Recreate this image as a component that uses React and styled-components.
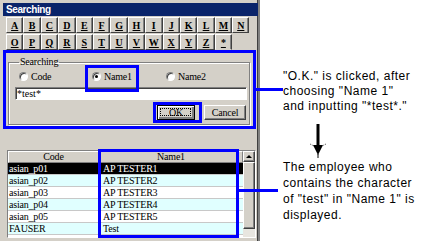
import React from 'react';
import styled, { createGlobalStyle } from 'styled-components';

const GlobalStyle = createGlobalStyle`
  html, body { margin: 0; padding: 0; background: #fff; }
  body { width: 423px; height: 241px; overflow: hidden; }
  * { box-sizing: border-box; }
`;

const serif = `"Liberation Serif", "DejaVu Serif", serif`;
const sans = `"Liberation Sans", Arial, sans-serif`;
const BLUE = '#0000ff';
const FACE = '#d4d0c8';

const Page = styled.div`
  position: relative;
  display: flex;
  width: 423px;
  height: 241px;
  overflow: hidden;
  background: #fff;
`;

const Dialog = styled.div`
  flex: none;
  width: 260px;
  height: 241px;
  padding-top: 3px;
  background: ${FACE};
  border-right: 2px solid #808080;
  box-shadow: inset -1px 0 #404040;
  display: flex;
  flex-direction: column;
`;

const TitleBar = styled.div`
  height: 13px;
  margin-left: 3px;
  padding-left: 3px;
  background: #0a246a;
  color: #fff;
  font: bold 10px ${sans};
  letter-spacing: -0.4px;
  line-height: 13px;
`;

const Tabs = styled.div`
  margin-top: 1px;
  padding-left: 6px;
  display: flex;
  flex-direction: column;
  gap: 1px;
`;

const TabRow = styled.div`
  display: grid;
  grid-template-columns: repeat(14, 17.4px);
  height: 16px;
`;

const Tab = styled.div`
  display: grid;
  place-items: center;
  background: ${FACE};
  border: 1px solid;
  border-color: #fff #404040 ${p => (p.$active ? FACE : '#404040')} #fff;
  box-shadow: inset -1px 0 #808080;
  font: bold 10px ${serif};
  text-decoration: underline;
  color: #000;
`;

const SearchBox = styled.div`
  margin: 0 0 0 3px;
  width: 253px;
  height: 79px;
  border: 3px solid ${BLUE};
  overflow: hidden;
`;

const Group = styled.fieldset`
  margin: 3px 3px 0 2px;
  padding: 0 2px 4px 6px;
  border: 1px solid #808080;
  box-shadow: inset 1px 1px #fff, 1px 1px #fff;
  min-width: 0;
`;

const Legend = styled.legend`
  margin-left: 4px;
  padding: 0 1px;
  font: 10px ${serif};
  letter-spacing: -0.2px;
  line-height: 12px;
  color: #000;
`;

const RadioRow = styled.div`
  display: grid;
  grid-template-columns: 73px 74px auto;
  align-items: center;
  height: 13px;
  margin-top: 2px;
  padding-left: 4px;
`;

const RadioItem = styled.label`
  position: relative;
  display: flex;
  align-items: center;
  gap: 3px;
  font: 10px ${serif};
  letter-spacing: -0.2px;
  color: #000;

  ${p =>
    p.$marked &&
    `&::after {
      content: '';
      position: absolute;
      left: -7px;
      top: -6px;
      width: 48px;
      height: 21px;
      border: 3px solid ${BLUE};
    }`}
`;

const RadioDot = styled.span`
  width: 9px;
  height: 9px;
  border-radius: 50%;
  background: #fff;
  border: 1px solid;
  border-color: #808080 #fff #fff #808080;
  box-shadow: inset 1px 1px #404040;
  display: grid;
  place-items: center;

  &::after {
    content: '';
    width: 3px;
    height: 3px;
    border-radius: 50%;
    background: ${p => (p.$checked ? '#000' : 'transparent')};
  }
`;

const TextInput = styled.div`
  margin-top: 4px;
  height: 13px;
  background: #fff;
  border: 1px solid;
  border-color: #808080 #fff #fff #808080;
  box-shadow: inset 1px 1px #404040;
  padding-left: 1px;
  font: 10px ${serif};
  line-height: 11px;
  color: #000;
`;

const ButtonRow = styled.div`
  margin-top: 5px;
  padding-right: 1px;
  display: flex;
  justify-content: flex-end;
  gap: 9px;
`;

const Button = styled.div`
  position: relative;
  width: ${p => p.$w}px;
  height: 15px;
  display: grid;
  place-items: center;
  background: ${FACE};
  border: 1px solid;
  border-color: ${p => (p.$default ? '#000' : '#fff #404040 #404040 #fff')};
  box-shadow: ${p =>
    p.$default
      ? 'inset 1px 1px #fff, inset -2px -2px #808080'
      : 'inset -1px -1px #808080'};
  font: 10px ${serif};
  letter-spacing: -0.2px;
  color: #000;

  ${p =>
    p.$default &&
    `&::before {
      content: '';
      position: absolute;
      inset: 2px 3px 3px 2px;
      border: 1px dotted #000;
    }
    &::after {
      content: '';
      position: absolute;
      left: -5px;
      top: -4px;
      right: -8px;
      bottom: -4px;
      border: 3px solid ${BLUE};
    }`}
`;

const ListFrame = styled.div`
  position: relative;
  margin: 21px 0 0 7px;
  width: 249px;
  height: 88px;
  display: flex;
  border: 1px solid;
  border-color: #808080 #fff #fff #808080;
`;

const Grid = styled.div`
  flex: 1;
  display: grid;
  grid-template-columns: 91px 1fr;
  grid-auto-rows: 12px;
  align-content: start;
  background: #fff;
  overflow: hidden;
`;

const HeadCell = styled.div`
  background: ${FACE};
  border: 1px solid;
  border-color: #fff #808080 #808080 #fff;
  text-align: center;
  font: 10px ${serif};
  letter-spacing: -0.2px;
  line-height: 10px;
  color: #000;
`;

const Cell = styled.div`
  padding-left: ${p => (p.$name ? 4 : 1)}px;
  background: ${p => (p.$selected ? '#000' : p.$tint ? '#e0ffff' : '#fff')};
  color: ${p => (p.$selected ? '#fff' : '#000')};
  border-bottom: 1px solid #c8c8c8;
  font: 10px ${serif};
  letter-spacing: -0.2px;
  line-height: 11px;
  white-space: nowrap;
  overflow: hidden;
`;

const ColumnMark = styled.div`
  position: absolute;
  left: 90px;
  top: -2px;
  width: 141px;
  height: 89px;
  border: 3px solid ${BLUE};
  pointer-events: none;
`;

const ScrollBar = styled.div`
  flex: none;
  width: 12px;
  display: flex;
  flex-direction: column;
  background: #e8e6e0;
`;

const ScrollArrow = styled.div`
  height: 11px;
  display: grid;
  place-items: center;
  background: ${FACE};
  border: 1px solid;
  border-color: #fff #404040 #404040 #fff;
  box-shadow: inset -1px -1px #808080;

  &::after {
    content: '';
    border-left: 3px solid transparent;
    border-right: 3px solid transparent;
    border-bottom: 3px solid #000;
  }
`;

const Thumb = styled.div`
  flex: 1;
  margin-bottom: 8px;
  background: ${FACE};
  border: 1px solid;
  border-color: #fff #404040 #404040 #fff;
  box-shadow: inset -1px -1px #808080;
`;

const Notes = styled.div`
  flex: 1;
  padding: 69px 0 0 23px;
  display: flex;
  flex-direction: column;
`;

const Note = styled.div`
  font: 12px ${sans};
  letter-spacing: 0.5px;
  line-height: ${p => p.$leading}px;
  color: #000;
  white-space: nowrap;
`;

const ArrowBox = styled.div`
  margin: 10px 0 1px 26px;
  width: 18px;
  height: 34px;
`;

const Callout = styled.div`
  position: absolute;
  left: ${p => p.$x}px;
  top: ${p => p.$y}px;
  width: ${p => p.$w}px;
  height: 3px;
  background: ${BLUE};
`;

const rows = [
  ['asian_p01', 'AP TESTER1'],
  ['asian_p02', 'AP TESTER2'],
  ['asian_p03', 'AP TESTER3'],
  ['asian_p04', 'AP TESTER4'],
  ['asian_p05', 'AP TESTER5'],
  ['FAUSER', 'Test'],
];

const row1 = 'ABCDEFGHIJKLMN'.split('');
const row2 = 'OPQRSTUVWXYZ*'.split('');

const DownArrow = () => (
  <svg width="18" height="34" viewBox="0 0 18 34">
    <rect x="7.5" y="0" width="3" height="23" fill="#000" />
    <polygon points="4,21 14,21 9,31" fill="#000" />
    <line x1="9" y1="30" x2="9" y2="34" stroke="#000" strokeWidth="1" />
    <line x1="1" y1="20" x2="5" y2="22" stroke="#555" strokeWidth="1" strokeDasharray="1 1" />
    <line x1="17" y1="20" x2="13" y2="22" stroke="#555" strokeWidth="1" strokeDasharray="1 1" />
  </svg>
);

export default function App() {
  return (
    <Page>
      <GlobalStyle />
      <Dialog>
        <TitleBar>Searching</TitleBar>
        <Tabs>
          <TabRow>
            {row1.map(l => (
              <Tab key={l}>{l}</Tab>
            ))}
          </TabRow>
          <TabRow>
            {row2.map(l => (
              <Tab key={l} $active={l === '*'}>
                {l}
              </Tab>
            ))}
          </TabRow>
        </Tabs>

        <SearchBox>
          <Group>
            <Legend>Searching</Legend>
            <RadioRow>
              <RadioItem>
                <RadioDot />
                Code
              </RadioItem>
              <RadioItem $marked>
                <RadioDot $checked />
                Name1
              </RadioItem>
              <RadioItem>
                <RadioDot />
                Name2
              </RadioItem>
            </RadioRow>
            <TextInput>*test*</TextInput>
            <ButtonRow>
              <Button $w={38} $default>
                OK
              </Button>
              <Button $w={42}>Cancel</Button>
            </ButtonRow>
          </Group>
        </SearchBox>

        <ListFrame>
          <Grid>
            <HeadCell>Code</HeadCell>
            <HeadCell>Name1</HeadCell>
            {rows.map(([code, name], i) => (
              <React.Fragment key={code}>
                <Cell $selected={i === 0} $tint={i % 2 === 1}>
                  {code}
                </Cell>
                <Cell $name $selected={i === 0} $tint={i % 2 === 1}>
                  {name}
                </Cell>
              </React.Fragment>
            ))}
          </Grid>
          <ScrollBar>
            <ScrollArrow />
            <Thumb />
          </ScrollBar>
          <ColumnMark />
        </ListFrame>
      </Dialog>

      <Notes>
        <Note $leading={15}>
          "O.K." is clicked, after
          <br />
          choosing "Name 1"
          <br />
          and inputting "*test*."
        </Note>
        <ArrowBox>
          <DownArrow />
        </ArrowBox>
        <Note $leading={16}>
          The employee who
          <br />
          contains the character
          <br />
          of "test" in "Name 1" is
          <br />
          displayed.
        </Note>
      </Notes>

      <Callout $x={256} $y={88} $w={27} />
      <Callout $x={238} $y={189} $w={40} />
    </Page>
  );
}
